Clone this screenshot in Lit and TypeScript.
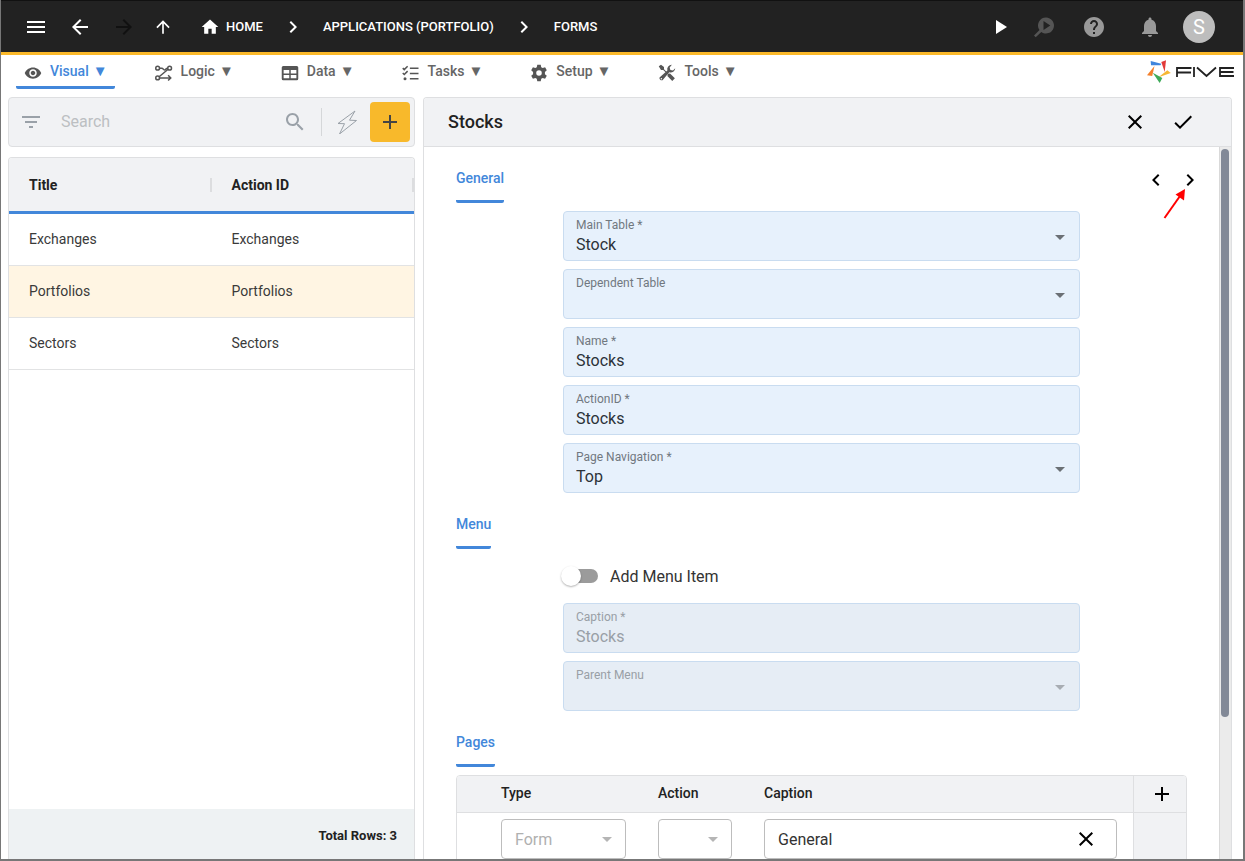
import { LitElement, html, css, svg } from "lit";
import { customElement, property, state } from "lit/decorators.js";
import { classMap } from "lit/directives/class-map.js";

const glyphs: Record<string, unknown> = {
  menu: svg`<path d="M3 18h18v-2H3v2zm0-5h18v-2H3v2zm0-7v2h18V6H3z"/>`,
  back: svg`<path d="M20 11H7.83l5.59-5.59L12 4l-8 8 8 8 1.41-1.41L7.83 13H20v-2z"/>`,
  forward: svg`<path d="M12 4l-1.41 1.41L16.17 11H4v2h12.17l-5.58 5.59L12 20l8-8z"/>`,
  up: svg`<path d="M4 12l1.41 1.41L11 7.83V20h2V7.83l5.58 5.59L20 12l-8-8-8 8z"/>`,
  home: svg`<path d="M10 20v-6h4v6h5v-8h3L12 3 2 12h3v8z"/>`,
  right: svg`<path d="M10 6L8.59 7.41 13.17 12l-4.58 4.59L10 18l6-6z"/>`,
  left: svg`<path d="M15.41 7.41L14 6l-6 6 6 6 1.41-1.41L10.83 12z"/>`,
  play: svg`<path d="M8 5v14l11-7z"/>`,
  inspect: svg`<path fill-rule="evenodd" d="M14 2.500a8 8 0 1 1-4.700 14.500L3.700 22.300 2 20.600l5.500-5.500A8 8 0 0 1 14 2.500zM11.500 6v9l6.800-4.500z"/>`,
  help: svg`<path d="M12 2C6.480 2 2 6.480 2 12s4.480 10 10 10 10-4.480 10-10S17.520 2 12 2zm1 17h-2v-2h2v2zm2.070-7.750l-.9.920C13.450 12.900 13 13.500 13 15h-2v-.5c0-1.100.45-2.100 1.170-2.830l1.240-1.260c.37-.36.59-.86.59-1.410 0-1.100-.9-2-2-2s-2 .9-2 2H8c0-2.210 1.790-4 4-4s4 1.790 4 4c0 .88-.36 1.680-.93 2.250z"/>`,
  bell: svg`<path d="M12 22c1.100 0 2-.9 2-2h-4c0 1.100.89 2 2 2zm6-6v-5c0-3.070-1.640-5.640-4.500-6.320V4c0-.83-.67-1.500-1.500-1.500s-1.500.67-1.500 1.500v.68C7.630 5.360 6 7.920 6 11v5l-2 2v1h16v-1l-2-2z"/>`,
  eye: svg`<path d="M12 4.500C7 4.500 2.730 7.610 1 12c1.730 4.390 6 7.500 11 7.500s9.270-3.110 11-7.500c-1.730-4.390-6-7.500-11-7.500zM12 17c-2.760 0-5-2.240-5-5s2.240-5 5-5 5 2.240 5 5-2.240 5-5 5zm0-8c-1.660 0-3 1.340-3 3s1.340 3 3 3 3-1.340 3-3-1.340-3-3-3z"/>`,
  logic: svg`<g fill="none" stroke="currentColor" stroke-width="2"><circle cx="3.500" cy="5.500" r="2.500"/><circle cx="3.500" cy="18.500" r="2.500"/><circle cx="19.500" cy="5.500" r="2.500"/><path d="M6 5.500h3c2 0 2 2.500 3.500 2.500S14.500 5.500 17 5.500M5.500 17L17.500 7M6 18.500h14M17.500 15l3.500 3.500-3.500 3.500"/></g>`,
  grid: svg`<path fill-rule="evenodd" d="M3 2.500h18a2 2 0 0 1 2 2v15a2 2 0 0 1-2 2H3a2 2 0 0 1-2-2v-15a2 2 0 0 1 2-2zM3.500 8v4.500H11V8zM13 8v4.500h7.500V8zM3.500 14.500V19H11v-4.500zM13 14.500V19h7.500v-4.500z"/>`,
  tasks: svg`<path fill="none" stroke="currentColor" stroke-width="2" d="M1 5.500l2 2L7.500 3M1 12l2 2 4.500-4.500M10.500 5.500H22M10.500 12.500H22M10.500 19.500H22"/><circle cx="4" cy="19.500" r="2"/>`,
  gear: svg`<path fill-rule="evenodd" d="M9.700 1h4.600l.7 3.300 1.900 1.100 3.200-1.100 2.300 4-2.500 2.200v3l2.500 2.200-2.300 4-3.200-1.100-1.900 1.100-.7 3.300H9.700L9 19.700l-1.900-1.100-3.200 1.100-2.300-4 2.500-2.200v-3L1.600 8.300l2.300-4 3.200 1.100L9 4.300zM12 8.300a3.700 3.700 0 1 0 0 7.400 3.700 3.700 0 0 0 0-7.400z"/>`,
  tools: svg`<path d="M1 3l3-2 4 3v3l6 6 2-.5 6.500 6.500-3.500 3.500-6.500-6.500.5-2-6-6H4z"/><path d="M23 5.500a6 6 0 0 1-8 5.500L6 21.500A3 3 0 0 1 2 18l10.500-9.500A6 6 0 0 1 18.500 1l-3 3.500 1 3.500 3.500.8z"/><circle cx="4.500" cy="19.500" r="1" fill="#fff"/>`,
  filter: svg`<path d="M10 18h4v-2h-4v2zM3 6v2h18V6H3zm3 7h12v-2H6v2z"/>`,
  search: svg`<path d="M15.500 14h-.79l-.28-.27C15.410 12.590 16 11.110 16 9.500 16 5.910 13.090 3 9.500 3S3 5.910 3 9.500 5.910 16 9.500 16c1.610 0 3.090-.59 4.230-1.570l.27.28v.79l5 4.990L20.490 19l-4.990-5zm-6 0C7.010 14 5 11.990 5 9.500S7.010 5 9.500 5 14 7.010 14 9.500 11.990 14 9.500 14z"/>`,
  bolt: svg`<path fill="none" stroke="currentColor" stroke-linejoin="round" d="M20 1L3 13.500l6.500.2L4.500 24l17-13.500-7-.3z"/>`,
  add: svg`<path d="M19 13h-6v6h-2v-6H5v-2h6V5h2v6h6v2z"/>`,
  close: svg`<path d="M19 6.410L17.590 5 12 10.590 6.410 5 5 6.410 10.590 12 5 17.590 6.410 19 12 13.410 17.590 19 19 17.590 13.410 12z"/>`,
  check: svg`<path d="M9 16.170L4.830 12l-1.420 1.410L9 19 21 7l-1.410-1.410z"/>`,
  caret: svg`<path d="M7 10l5 5 5-5z"/>`,
};

const icon = (name: string, size = 24) =>
  html`<svg viewBox="0 0 24 24" width=${size} height=${size} fill="currentColor" aria-hidden="true">${glyphs[name]}</svg>`;

const shared = css`
  * { box-sizing: border-box; }
  svg { display: block; flex: none; }
  button, input, select { font: inherit; color: inherit; margin: 0; }
  button { border: 0; padding: 0; background: none; display: flex; align-items: center; justify-content: center; cursor: pointer; }
  a { color: inherit; text-decoration: none; }
`;

@customElement("top-bar")
class TopBar extends LitElement {
  static styles = [shared, css`
    .bar { display: flex; align-items: center; height: 55px; background: #222; border-top: 1px solid #111; border-bottom: 3px solid #fbb92a; color: #fff; padding: 1px 28px 0 23px; }
    .history { display: flex; align-items: center; gap: 20px; }
    .history button { width: 24px; height: 24px; }
    .history .up { width: 14px; }
    .off { color: #111; }
    .crumbs { display: flex; align-items: center; gap: 18px; margin-left: 30px; font-size: 13px; font-weight: 500; line-height: 20px; white-space: nowrap; }
    .home { display: flex; align-items: center; gap: 6px; }
    .actions { display: flex; align-items: center; margin-left: auto; gap: 26px; color: #999; }
    .run { color: #fff; margin-right: -6px; }
    .inspect { color: #555; }
    .bell { margin: 0 -5px 0 6px; }
    .avatar { width: 32px; height: 32px; border-radius: 50%; background: #bdbdbd; color: #fff; font-size: 20px; }
  `];
  render() {
    return html`<header class="bar">
      <nav class="history" aria-label="History">
        <button aria-label="Menu">${icon("menu")}</button>
        <button aria-label="Back">${icon("back")}</button>
        <button class="off" aria-label="Forward" disabled>${icon("forward")}</button>
        <button class="up" aria-label="Up">${icon("up", 20)}</button>
      </nav>
      <nav class="crumbs" aria-label="Breadcrumb">
        <a class="home" href="#home">${icon("home", 20)}HOME</a>
        ${icon("right", 24)}
        <a href="#applications">APPLICATIONS (PORTFOLIO)</a>
        ${icon("right", 24)}
        <a href="#forms">FORMS</a>
      </nav>
      <div class="actions">
        <button class="run" aria-label="Run">${icon("play")}</button>
        <button class="inspect" aria-label="Inspect">${icon("inspect")}</button>
        <button aria-label="Help">${icon("help")}</button>
        <button class="bell" aria-label="Notifications">${icon("bell")}</button>
        <button class="avatar" aria-label="Account">S</button>
      </div>
    </header>`;
  }
}

@customElement("main-tabs")
class MainTabs extends LitElement {
  @state() private current = "Visual";
  private tabs = [
    ["Visual", "eye"], ["Logic", "logic"], ["Data", "grid"],
    ["Tasks", "tasks"], ["Setup", "gear"], ["Tools", "tools"],
  ];
  static styles = [shared, css`
    .row { display: flex; height: 42px; padding: 0 8px 8px 15px; }
    .tabs { display: flex; gap: 32px; }
    .tab { gap: 8px; padding: 0 7px 0 8px; border-bottom: 3px solid transparent; font-size: 14px; font-weight: 500; color: #666; border-radius: 2px; }
    .tab svg { color: #555; margin-top: 4px; }
    .name { display: flex; gap: 4px; }
    .mark { font-size: 15px; line-height: 16px; }
    .active { color: #4287da; border-color: #4287da; }
    .logo { margin-left: auto; margin-top: 4px; }
  `];
  render() {
    return html`<div class="row">
      <nav class="tabs">${this.tabs.map(([name, glyph]) => html`
        <button class=${classMap({ tab: true, active: name === this.current })} @click=${() => (this.current = name)}>
          ${icon(glyph, 18)}<span class="name"><span>${name}</span><span class="mark">▼</span></span>
        </button>`)}
      </nav>
      <svg class="logo" width="88" height="26" viewBox="1147 59 88 26" role="img" aria-label="Five">
        <path fill="#3f85dc" d="M1150.700 61l10.600 2.700-.8 1.500-9.500.1z"/>
        <path fill="#e23a3a" d="M1161.300 62l4.700-1.700-1.300 11.700z"/>
        <path fill="#f7b733" d="M1158.500 77.300l8.800-7 3.500 2.700z"/>
        <path fill="#3faa59" d="M1152.700 72.700l9.600 5.300-2.600 5z"/>
        <path fill="#f47f2a" d="M1154.500 66l-2.300 10-5.200-.7z"/>
        <path fill="none" stroke="#222" stroke-width="1.800" d="M1177 77v-9h14.500M1177 72.500h14M1194 67v10M1197 67.500l9.500 8.500 9.500-8.500M1234 68h-14v8h14M1220 72h13.500"/>
      </svg>
    </div>`;
  }
}

@customElement("record-list")
class RecordList extends LitElement {
  @property({ attribute: false }) rows = ["Exchanges", "Portfolios", "Sectors"];
  @state() private selected = "Portfolios";
  static styles = [shared, css`
    :host { display: flex; flex-direction: column; gap: 10px; min-height: 0; }
    .search { display: flex; align-items: center; height: 50px; padding: 0 4px 0 10px; background: #f1f2f4; border: 1px solid #dedfe1; border-radius: 4px; color: #9aa1a8; }
    .search input { flex: 1; min-width: 0; border: 0; outline: 0; padding: 0 0 2px; margin-left: 18px; background: none; font-size: 16px; }
    .search input::placeholder { color: #bcbfc2; opacity: 1; }
    .tools { display: flex; align-items: center; border-left: 1px solid #d5d7d9; height: 28px; margin-left: 14px; padding-left: 13px; gap: 11px; }
    .add { width: 40px; height: 40px; background: #f8b92b; border-radius: 4px; color: #444; }
    .list { flex: 1; display: flex; flex-direction: column; border: 1px solid #dedfe1; border-bottom: 0; border-radius: 4px 4px 0 0; overflow: hidden; }
    table { width: 100%; border-collapse: separate; border-spacing: 0; table-layout: fixed; font-size: 14px; color: #3a3a3a; }
    th { height: 56px; padding: 0; background: #f1f2f4; border-bottom: 3px solid #4287da; color: #222; font-weight: 700; text-align: left; }
    .head { display: flex; justify-content: space-between; align-items: center; padding-left: 20px; height: 14px; border-right: 2px solid #dcdddf; }
    td { height: 52px; padding: 0 0 2px 20px; border-bottom: 1px solid #e2e3e4; }
    .chosen { background: #fff5e3; }
    .total { margin-top: auto; height: 50px; padding: 2px 17px 0; display: flex; align-items: center; justify-content: flex-end; background: #eef2f3; font-size: 13px; font-weight: 700; color: #222; }
  `];
  render() {
    return html`
      <div class="search">
        ${icon("filter")}
        <input type="text" placeholder="Search" aria-label="Search">
        ${icon("search")}
        <div class="tools">
          <button aria-label="Quick actions">${icon("bolt")}</button>
          <button class="add" aria-label="Add record">${icon("add")}</button>
        </div>
      </div>
      <div class="list">
        <table>
          <thead><tr><th><div class="head">Title</div></th><th><div class="head">Action ID</div></th></tr></thead>
          <tbody>${this.rows.map((row) => html`
            <tr class=${classMap({ chosen: row === this.selected })} @click=${() => (this.selected = row)}><td>${row}</td><td>${row}</td></tr>`)}
          </tbody>
        </table>
        <div class="total">Total Rows: ${this.rows.length}</div>
      </div>`;
  }
}

@customElement("form-field")
class FormField extends LitElement {
  @property() label = "";
  @property() value = "";
  @property({ type: Boolean }) choice = false;
  @property({ type: Boolean }) disabled = false;
  static styles = [shared, css`
    :host { display: block; }
    .field { display: grid; grid-template: 16px 24px / 1fr 24px; height: 50px; padding: 5px 7px 3px 12px; border: 1px solid #c9dcf0; border-radius: 4px; background: #e7f1fc; color: #2c3238; }
    label { font-size: 12px; line-height: 16px; color: #71787f; grid-area: 1 / 1; }
    input, select { grid-area: 2 / 1 / 3 / 3; appearance: none; border: 0; outline: 0; padding: 0; background: none; font-size: 16px; line-height: 24px; height: 24px; width: 100%; opacity: 1; }
    svg { grid-area: 1 / 2 / 3 / 3; align-self: center; color: #6b7075; pointer-events: none; }
    .off { background: #e6edf5; }
    .off, .off label, .off input { color: #999fa6; }
    .off svg { color: #a8adb3; }
  `];
  render() {
    return html`<div class=${classMap({ field: true, off: this.disabled })}>
      <label for="control">${this.label}</label>
      ${this.choice
        ? html`<select id="control" ?disabled=${this.disabled}><option>${this.value}</option></select>${icon("caret")}`
        : html`<input id="control" type="text" .value=${this.value} ?disabled=${this.disabled}>`}
    </div>`;
  }
}

@customElement("form-editor")
class FormEditor extends LitElement {
  @state() private menuItem = false;
  static styles = [shared, css`
    :host { display: flex; flex-direction: column; min-height: 0; border: 1px solid #dedfe1; border-bottom: 0; border-radius: 4px 4px 0 0; overflow: hidden; }
    .title { display: flex; align-items: center; flex: none; height: 49px; padding: 0 36px 0 24px; gap: 24px; background: #f1f2f4; border-bottom: 1px solid #dedfe1; color: #000; }
    h1 { margin: 0 auto 0 0; font-size: 18px; font-weight: 500; line-height: 24px; color: #222; }
    .body { flex: 1; display: flex; min-height: 0; }
    .content { flex: 1; min-width: 0; overflow: hidden; padding: 0 32px; }
    .track { display: flex; flex-direction: column; width: 12px; padding: 2px 2px 0 1px; background: #ebebeb; border-left: 1px solid #d9d9d9; }
    .thumb { flex: 4; width: 8px; border-radius: 4px; background: #828997; }
    .rest { flex: 1; }
    section { padding-top: 21px; }
    .top { display: flex; justify-content: space-between; align-items: flex-start; }
    h2 { width: fit-content; margin: 0 0 8px; padding-bottom: 12px; border-bottom: 3px solid #4287da; border-radius: 2px; font-size: 14px; font-weight: 500; line-height: 20px; color: #4287da; }
    .fields { display: grid; gap: 8px; padding: 0 107px; }
    .pager { display: flex; gap: 10px; margin-right: -15px; color: #000; }
    .pager button { width: 24px; height: 24px; }
    .next { position: relative; }
    .pointer { position: absolute; left: -15px; top: 20px; pointer-events: none; }
    .switch { display: flex; align-items: center; gap: 12px; height: 38px; font-size: 16px; color: #333; }
    .switch input { appearance: none; width: 35px; height: 14px; border-radius: 7px; background: #9b9b9b; position: relative; cursor: pointer; }
    .switch input::before { content: ""; position: absolute; left: -2px; top: -3px; width: 20px; height: 20px; border-radius: 50%; background: #fff; box-shadow: 0 1px 2px rgba(0, 0, 0, 0.3); }
    .switch input:checked::before { left: 17px; }
    table { width: 100%; table-layout: fixed; border-collapse: separate; border-spacing: 0; border: 1px solid #dedfe1; border-radius: 4px; overflow: hidden; }
    th { height: 37px; padding: 0 0 2px; background: #f1f2f4; border-bottom: 1px solid #dedfe1; font-size: 14px; font-weight: 500; text-align: left; color: #222; }
    td { padding: 6px 0; height: 52px; }
    .lead { width: 44px; } .type { width: 157px; } .action { width: 106px; } .end { width: 53px; }
    .side { background: #f1f2f4; border-left: 1px solid #dedfe1; color: #000; }
    .side button { width: 100%; padding: 1px 0 0 4px; }
    .box { display: grid; grid-template-columns: 1fr 24px; align-items: center; height: 40px; border: 1px solid #bdbdbd; border-radius: 4px; padding: 0 6px 0 13px; color: #b0b0b0; }
    .box select, .box input { grid-area: 1 / 1 / 2 / 3; appearance: none; width: 100%; border: 0; outline: 0; padding: 0; background: none; font-size: 16px; opacity: 1; color: inherit; }
    .box svg, .box button { grid-area: 1 / 2; }
    .box svg { color: #b5b5b5; pointer-events: none; }
    .wide { margin-right: 32px; }
    .text { margin-right: 16px; padding-right: 18px; color: #333; }
    .text svg { color: #000; }
  `];
  render() {
    return html`
      <div class="title"><h1>Stocks</h1>
        <button aria-label="Cancel">${icon("close")}</button>
        <button aria-label="Save">${icon("check")}</button>
      </div>
      <div class="body">
        <div class="content">
          <section>
            <div class="top"><h2>General</h2>
              <div class="pager">
                <button aria-label="Previous">${icon("left")}</button>
                <button class="next" aria-label="Next">${icon("right")}
                  <svg class="pointer" width="26" height="32" viewBox="0 0 26 32"><path d="M1.500 30L17 8" stroke="#f00" stroke-width="2"/><path d="M22 1L12.500 6.500l8.500 6z" fill="#f00"/></svg>
                </button>
              </div>
            </div>
            <div class="fields">
              <form-field label="Main Table *" value="Stock" choice></form-field>
              <form-field label="Dependent Table" choice></form-field>
              <form-field label="Name *" value="Stocks"></form-field>
              <form-field label="ActionID *" value="Stocks"></form-field>
              <form-field label="Page Navigation *" value="Top" choice></form-field>
            </div>
          </section>
          <section>
            <h2>Menu</h2>
            <div class="fields">
              <label class="switch"><input type="checkbox" role="switch" .checked=${this.menuItem} @change=${() => (this.menuItem = !this.menuItem)}>Add Menu Item</label>
              <form-field label="Caption *" value="Stocks" ?disabled=${!this.menuItem}></form-field>
              <form-field label="Parent Menu" choice ?disabled=${!this.menuItem}></form-field>
            </div>
          </section>
          <section>
            <h2>Pages</h2>
            <table>
              <thead><tr>
                <th class="lead"></th><th class="type">Type</th><th class="action">Action</th><th>Caption</th>
                <th class="end side"><button aria-label="Add page">${icon("add")}</button></th>
              </tr></thead>
              <tbody><tr>
                <td></td>
                <td><div class="box wide"><select aria-label="Type" disabled><option>Form</option></select>${icon("caret")}</div></td>
                <td><div class="box wide"><select aria-label="Action" disabled><option></option></select>${icon("caret")}</div></td>
                <td><div class="box text"><input type="text" aria-label="Caption" .value=${"General"}><button aria-label="Clear">${icon("close")}</button></div></td>
                <td class="side"></td>
              </tr></tbody>
            </table>
          </section>
        </div>
        <div class="track"><div class="thumb"></div><div class="rest"></div></div>
      </div>`;
  }
}

@customElement("app-root")
class AppRoot extends LitElement {
  static styles = css`
    :host { display: block; font-family: Roboto, "Liberation Sans", sans-serif; }
    .frame { box-sizing: border-box; display: flex; flex-direction: column; height: 100vh; background: #fff; border: solid #777; border-width: 0 2px 2px 1px; overflow: hidden; }
    .work { flex: 1; min-height: 0; display: grid; grid-template-columns: 407px minmax(0, 1fr); grid-template-rows: minmax(0, 1fr); gap: 8px; padding: 0 11px 0 7px; }
  `;
  render() {
    return html`<div class="frame">
      <top-bar></top-bar>
      <main-tabs></main-tabs>
      <main class="work"><record-list></record-list><form-editor></form-editor></main>
    </div>`;
  }
}
